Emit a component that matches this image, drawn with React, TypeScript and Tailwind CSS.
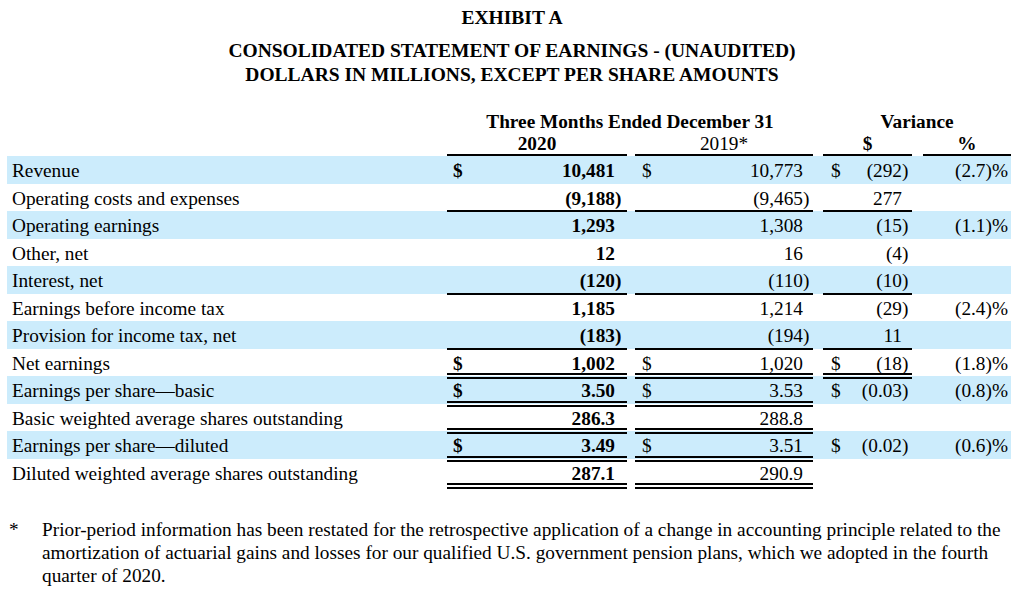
import React from "react";

type Cell = { v: string; d?: boolean } | null;
type Row = {
  label: string;
  blue?: boolean;
  c1: Cell;
  c2: Cell;
  c3: Cell;
  c4: string | null;
  line?: "single" | "double";
  lineCols?: number;
};

const rows: Row[] = [
  { label: "Revenue", blue: true, c1: { v: "10,481", d: true }, c2: { v: "10,773", d: true }, c3: { v: "(292)", d: true }, c4: "(2.7)%" },
  { label: "Operating costs and expenses", c1: { v: "(9,188)" }, c2: { v: "(9,465)" }, c3: { v: "277" }, c4: null, line: "single", lineCols: 3 },
  { label: "Operating earnings", blue: true, c1: { v: "1,293" }, c2: { v: "1,308" }, c3: { v: "(15)" }, c4: "(1.1)%" },
  { label: "Other, net", c1: { v: "12" }, c2: { v: "16" }, c3: { v: "(4)" }, c4: null },
  { label: "Interest, net", blue: true, c1: { v: "(120)" }, c2: { v: "(110)" }, c3: { v: "(10)" }, c4: null, line: "single", lineCols: 3 },
  { label: "Earnings before income tax", c1: { v: "1,185" }, c2: { v: "1,214" }, c3: { v: "(29)" }, c4: "(2.4)%" },
  { label: "Provision for income tax, net", blue: true, c1: { v: "(183)" }, c2: { v: "(194)" }, c3: { v: "11" }, c4: null, line: "single", lineCols: 3 },
  { label: "Net earnings", c1: { v: "1,002", d: true }, c2: { v: "1,020", d: true }, c3: { v: "(18)", d: true }, c4: "(1.8)%", line: "double", lineCols: 3 },
  { label: "Earnings per share\u2014basic", blue: true, c1: { v: "3.50", d: true }, c2: { v: "3.53", d: true }, c3: { v: "(0.03)", d: true }, c4: "(0.8)%", line: "double", lineCols: 2 },
  { label: "Basic weighted average shares outstanding", c1: { v: "286.3" }, c2: { v: "288.8" }, c3: null, c4: null, line: "double", lineCols: 2 },
  { label: "Earnings per share\u2014diluted", blue: true, c1: { v: "3.49", d: true }, c2: { v: "3.51", d: true }, c3: { v: "(0.02)", d: true }, c4: "(0.6)%", line: "double", lineCols: 2 },
  { label: "Diluted weighted average shares outstanding", c1: { v: "287.1" }, c2: { v: "290.9" }, c3: null, c4: null, line: "double", lineCols: 2 },
];

function lineClass(line: Row["line"], on: boolean) {
  if (!on || !line) return "";
  if (line === "single") return "relative border-b-2 border-black pt-[1px] -mb-[1px]";
  return "relative border-b-[6px] border-double border-black pt-[3px] -mb-[3px]";
}

function NumCell({
  cell,
  bold,
  width,
  ml,
  dollarPl,
  pr,
  cls,
}: {
  cell: Cell;
  bold?: boolean;
  width: string;
  ml: string;
  dollarPl: string;
  pr: string;
  cls: string;
}) {
  const v = cell?.v ?? "";
  const hang = v.endsWith(")");
  const main = hang ? v.slice(0, -1) : v;
  return (
    <div className={`${width} ${ml} ${pr} ${cls} flex items-center ${bold ? "font-bold" : ""}`}>
      <span className={`${dollarPl}`}>{cell?.d ? "$" : ""}</span>
      <span className="flex-1 text-right">{main}</span>
      <span className="w-[8px] text-left">{hang ? ")" : ""}</span>
    </div>
  );
}

export default function App() {
  return (
    <div className="w-[1024px] h-[604px] bg-white text-black font-['Liberation_Serif',serif] text-[19.3px] overflow-hidden">
      <div className="flex flex-col items-center font-bold leading-[24px] pt-[6px] text-[19.5px]">
        <div>EXHIBIT A</div>
        <div className="mt-[9px]">CONSOLIDATED STATEMENT OF EARNINGS - (UNAUDITED)</div>
        <div>DOLLARS IN MILLIONS, EXCEPT PER SHARE AMOUNTS</div>
      </div>

      <div className="ml-[7px] w-[1004px] mt-[22px]">
        <div className="flex h-[22px] pt-[4px] font-bold">
          <div className="w-[440px]" />
          <div className="w-[366px] flex items-center justify-center">Three Months Ended December 31</div>
          <div className="w-[10px]" />
          <div className="w-[188px] flex items-center justify-center">Variance</div>
        </div>
        <div className="flex h-[25px]">
          <div className="w-[440px]" />
          <div className="w-[180px] pt-[4px] border-b-2 border-black flex items-center justify-center font-bold">2020</div>
          <div className="w-[178px] ml-[8px] pt-[4px] border-b-2 border-black flex items-center justify-center">2019*</div>
          <div className="w-[89px] ml-[10px] pt-[4px] border-b-2 border-black flex items-center justify-center font-bold">$</div>
          <div className="w-[88px] ml-[11px] pt-[4px] border-b-2 border-black flex items-center justify-center font-bold">%</div>
        </div>

        {rows.map((r, i) => {
          const n = r.lineCols ?? 0;
          return (
            <div key={i} className={`flex h-[27.5px] pt-[4px] ${r.blue ? "bg-[#ccecfc]" : ""}`}>
              <div className="w-[440px] pl-[5px] flex items-center whitespace-nowrap">{r.label}</div>
              <NumCell cell={r.c1} bold width="w-[180px]" ml="" dollarPl="pl-[6px]" pr="pr-[4px]" cls={lineClass(r.line, n >= 1)} />
              <NumCell cell={r.c2} width="w-[178px]" ml="ml-[8px]" dollarPl="pl-[7px]" pr="pr-[2px]" cls={lineClass(r.line, n >= 2)} />
              {r.c3 ? (
                <NumCell cell={r.c3} width="w-[89px]" ml="ml-[10px]" dollarPl="pl-[8px]" pr="pr-[2px]" cls={lineClass(r.line, n >= 3)} />
              ) : (
                <div className="w-[89px] ml-[10px]" />
              )}
              <div className="w-[88px] ml-[11px] pr-[3px] flex items-center justify-end">{r.c4 ?? ""}</div>
            </div>
          );
        })}
      </div>

      <div className="flex mt-[32px] pl-[9px] leading-[23px]">
        <div className="w-[33px]">*</div>
        <div className="flex flex-col">
          <span className="whitespace-nowrap">
            Prior-period information has been restated for the retrospective application of a change in accounting principle related to the
          </span>
          <span className="whitespace-nowrap">
            amortization of actuarial gains and losses for our qualified U.S. government pension plans, which we adopted in the fourth
          </span>
          <span className="whitespace-nowrap">quarter of 2020.</span>
        </div>
      </div>
    </div>
  );
}
